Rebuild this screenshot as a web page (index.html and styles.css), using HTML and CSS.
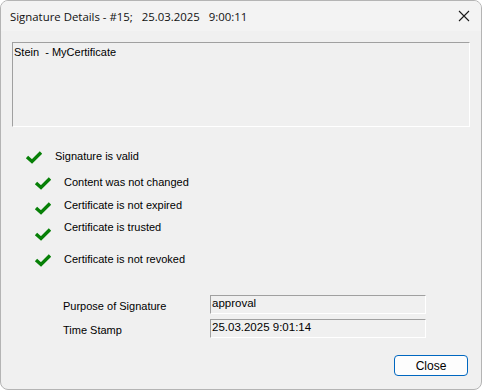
FILE: index.html
```html
<!DOCTYPE html>
<html lang="en">
<head>
    <meta charset="UTF-8">
    <title>Signature Details</title>
    <link rel="stylesheet" href="styles.css">
</head>
<body>
    <div class="window">
        <div class="titlebar">
            <span class="title">Signature Details - #15;&nbsp;&nbsp; 25.03.2025&nbsp;&nbsp; 9:00:11</span>
            <svg class="close-x" width="12" height="12" viewBox="0 0 12 12">
                <path d="M1 1 L11 11 M11 1 L1 11" stroke="#1a1a1a" stroke-width="1.1"/>
            </svg>
        </div>

        <div class="content">
            <div class="cert-box">Stein&nbsp; - MyCertificate</div>

            <div class="check-row main">
                <svg class="check" width="18" height="14" viewBox="0 0 18 14">
                    <path d="M2 7 L7 11.5 L16 2.5" fill="none" stroke="#078007" stroke-width="3.4"/>
                </svg>
                <span class="label">Signature is valid</span>
            </div>
            <div class="check-row sub r1">
                <svg class="check" width="18" height="14" viewBox="0 0 18 14">
                    <path d="M2 7 L7 11.5 L16 2.5" fill="none" stroke="#078007" stroke-width="3.4"/>
                </svg>
                <span class="label">Content was not changed</span>
            </div>
            <div class="check-row sub r2">
                <svg class="check" width="18" height="14" viewBox="0 0 18 14">
                    <path d="M2 7 L7 11.5 L16 2.5" fill="none" stroke="#078007" stroke-width="3.4"/>
                </svg>
                <span class="label">Certificate is not expired</span>
            </div>
            <div class="check-row sub r3">
                <svg class="check" width="18" height="14" viewBox="0 0 18 14">
                    <path d="M2 7 L7 11.5 L16 2.5" fill="none" stroke="#078007" stroke-width="3.4"/>
                </svg>
                <span class="label">Certificate is trusted</span>
            </div>
            <div class="check-row sub r4">
                <svg class="check" width="18" height="14" viewBox="0 0 18 14">
                    <path d="M2 7 L7 11.5 L16 2.5" fill="none" stroke="#078007" stroke-width="3.4"/>
                </svg>
                <span class="label">Certificate is not revoked</span>
            </div>

            <div class="fields">
                <div class="field-row">
                    <span class="field-label">Purpose of Signature</span>
                    <div class="field-value">approval</div>
                </div>
                <div class="field-row">
                    <span class="field-label">Time Stamp</span>
                    <div class="field-value">25.03.2025 9:01:14</div>
                </div>
            </div>

            <div class="buttons">
                <button class="btn">Close</button>
            </div>
        </div>
    </div>
</body>
</html>
```

FILE: styles.css
```css
html, body {
    margin: 0;
    padding: 0;
    background: #ffffff;
}
.window {
    width: 480px;
    height: 388px;
    border: 1px solid #b4b4b4;
    border-radius: 8px;
    background: #f0f0f0;
    overflow: hidden;
    font-family: "Liberation Sans", Arial, sans-serif;
    font-size: 11px;
    color: #000;
}
.titlebar {
    height: 30px;
    background: #f3f3f3;
    display: flex;
    align-items: center;
    justify-content: space-between;
    padding: 0 11px 0 9px;
}
.title {
    font-family: "Open Sans", "Noto Sans", sans-serif;
    font-size: 11.4px;
    color: #111;
}
.close-x {
    display: block;
}
.content {
    padding: 11px 11px 0 11px;
}
.cert-box {
    height: 79px;
    border-top: 1px solid #a0a0a0;
    border-left: 1px solid #a0a0a0;
    border-bottom: 1px solid #ffffff;
    border-right: 1px solid #ffffff;
    padding: 2px 1px;
    line-height: 14px;
}
.check-row {
    display: flex;
    align-items: center;
}
.check {
    display: block;
    flex: none;
}
.check-row.main {
    margin-top: 22px;
    padding-left: 13px;
    height: 16px;
}
.check-row.main .label {
    margin-left: 12px;
    margin-top: -2px;
}
.check-row.sub {
    padding-left: 22px;
    height: 16px;
}
.check-row.sub .label {
    margin-left: 12px;
}
.r1 { margin-top: 10px; }
.r1 .label { margin-top: -3px; }
.r2 { margin-top: 9px; }
.r2 .label { margin-top: -7px; }
.r3 { margin-top: 10px; }
.r3 .label { margin-top: -15px; }
.r4 { margin-top: 10px; }
.r4 .label { margin-top: -3px; }
.fields {
    margin-top: 27px;
    padding-left: 51px;
}
.field-row {
    display: flex;
    align-items: flex-start;
    margin-bottom: 5px;
}
.field-label {
    width: 147px;
    padding-top: 5px;
}
.field-value {
    width: 213px;
    height: 16px;
    border-top: 1px solid #a0a0a0;
    border-left: 1px solid #a0a0a0;
    border-bottom: 1px solid #ffffff;
    border-right: 1px solid #ffffff;
    padding: 1px 0 0 1px;
    line-height: 13px;
    font-size: 11.5px;
}
.buttons {
    display: flex;
    justify-content: flex-end;
    margin-top: 17px;
    padding-right: 2px;
}
.btn {
    width: 74px;
    height: 21px;
    border: 1px solid #0067c0;
    border-radius: 4px;
    background: #fdfdfd;
    font-family: "Liberation Sans", Arial, sans-serif;
    font-size: 12px;
    color: #000;
    padding: 0;
}
```
